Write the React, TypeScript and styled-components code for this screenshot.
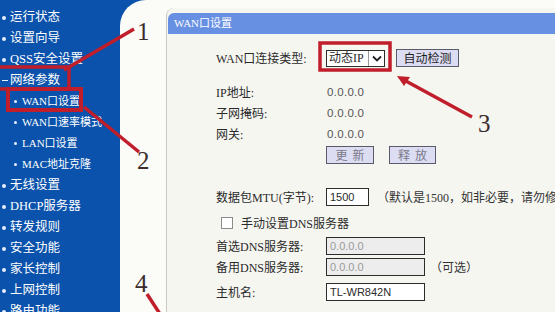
import React from "react";
import styled, { createGlobalStyle } from "styled-components";

const Global = createGlobalStyle`
  html, body { margin: 0; padding: 0; background: #ffffff; }
  body { font-family: "Liberation Serif", "Noto Sans CJK SC", serif; font-size: 12px; }
  * { box-sizing: border-box; }
`;

const MIX = `"Liberation Serif", "Noto Sans CJK SC", serif`;

const Page = styled.div`
  position: relative;
  display: flex;
  width: 555px;
  height: 312px;
  overflow: hidden;
  background: #0a52ab;
`;

const Sidebar = styled.nav`
  width: 120px;
  flex: none;
  padding-top: 7px;
  display: flex;
  flex-direction: column;
`;

const MenuItem = styled.div<{ $sub?: boolean; $open?: boolean }>`
  position: relative;
  height: 21px;
  line-height: 21px;
  padding-left: ${(p) => (p.$sub ? 22 : 10)}px;
  color: #ffffff;
  font-family: ${MIX};
  font-size: ${(p) => (p.$sub ? 11 : 12.5)}px;
  white-space: nowrap;
  &::before {
    content: "";
    position: absolute;
    left: ${(p) => (p.$sub ? 14 : 2)}px;
    top: ${(p) => (p.$open ? 10 : 9)}px;
    width: ${(p) => (p.$open ? 6 : p.$sub ? 3 : 4)}px;
    height: ${(p) => (p.$open ? 1 : p.$sub ? 3 : 4)}px;
    background: #e8eefc;
    border-radius: ${(p) => (p.$open ? 0 : 50)}%;
  }
`;

const Gutter = styled.div`
  width: 46px;
  flex: none;
  background: #fbfbf8;
  border-top-left-radius: 26px;
`;

const Panel = styled.main`
  flex: 1;
  display: flex;
  flex-direction: column;
  background: #fbfbf8;
`;

const PanelFrame = styled.div`
  flex: 1;
  margin-top: 8px;
  border-left: 1px solid #c9c9c2;
  border-top-left-radius: 8px;
  background: #f6f6f1;
  padding-top: 5px;
`;

const PanelHeader = styled.div`
  height: 21px;
  line-height: 21px;
  margin-left: 1px;
  padding-left: 6px;
  background: #6890e2;
  color: #ffffff;
  font-family: ${MIX};
  font-size: 11px;
  border-top-left-radius: 6px;
`;

const Form = styled.div`
  display: flex;
  flex-direction: column;
  padding-left: 49px;
  color: #2a2a2a;
  font-family: ${MIX};
`;

const Row = styled.div<{ $mt: number; $h: number }>`
  display: flex;
  align-items: center;
  margin-top: ${(p) => p.$mt}px;
  height: ${(p) => p.$h}px;
  white-space: nowrap;
`;

const Label = styled.span`
  width: 110px;
  flex: none;
  font-size: 12px;
`;

const Value = styled.span`
  padding-left: 1px;
  color: #555555;
  font-family: "Liberation Sans", sans-serif;
  font-size: 11.5px;
  letter-spacing: 0.3px;
`;

const Select = styled.div`
  display: flex;
  align-items: stretch;
  width: 59px;
  height: 17px;
  border: 1px solid #2c2c2c;
  background: #ffffff;
  font-size: 12px;
`;

const SelectText = styled.span`
  flex: 1;
  line-height: 15px;
  padding-left: 2px;
`;

const SelectArrow = styled.span`
  width: 16px;
  border-left: 1px solid #9a9a9a;
  display: flex;
  align-items: center;
  justify-content: center;
`;

const Button = styled.button<{ $w: number; $dim?: boolean; $ml?: number }>`
  width: ${(p) => p.$w}px;
  height: 18px;
  margin-left: ${(p) => p.$ml ?? 0}px;
  padding: 0;
  border: 1px solid #5a5a6a;
  background: #dcdcf2;
  color: ${(p) => (p.$dim ? "#7a7a8a" : "#1f1f1f")};
  font-family: "Noto Sans CJK SC", sans-serif;
  font-size: 12px;
  line-height: 16px;
  letter-spacing: ${(p) => (p.$dim ? 5 : 0)}px;
  text-indent: ${(p) => (p.$dim ? 5 : 0)}px;
`;

const Input = styled.div<{ $w: number; $disabled?: boolean }>`
  width: ${(p) => p.$w}px;
  height: 18px;
  border: 1px solid #2c2c2c;
  background: ${(p) => (p.$disabled ? "#ededed" : "#ffffff")};
  color: ${(p) => (p.$disabled ? "#9a9a9a" : "#2a2a2a")};
  padding-left: 3px;
  font-family: "Liberation Sans", sans-serif;
  font-size: 11px;
  line-height: 16px;
`;

const Hint = styled.span<{ $ml: number }>`
  margin-left: ${(p) => p.$ml}px;
  font-size: 12px;
  color: #333333;
`;

const Check = styled.span`
  width: 12px;
  height: 12px;
  margin-left: 5px;
  margin-right: 8px;
  border: 1px solid #8c8c8c;
  background: #ffffff;
`;

const Overlay = styled.svg`
  position: absolute;
  left: 0;
  top: 0;
  pointer-events: none;
`;

const Num = styled.text`
  font-family: "Liberation Serif", serif;
  font-size: 25px;
  fill: #3b2c2c;
`;

const menu: { t: string; sub?: boolean; open?: boolean }[] = [
  { t: "运行状态" },
  { t: "设置向导" },
  { t: "QSS安全设置" },
  { t: "网络参数", open: true },
  { t: "WAN口设置", sub: true },
  { t: "WAN口速率模式", sub: true },
  { t: "LAN口设置", sub: true },
  { t: "MAC地址克隆", sub: true },
  { t: "无线设置" },
  { t: "DHCP服务器" },
  { t: "转发规则" },
  { t: "安全功能" },
  { t: "家长控制" },
  { t: "上网控制" },
  { t: "路由功能" },
];

const RED = "#bf1e2a";

export default function App() {
  return (
    <>
      <Global />
      <Page>
        <Sidebar>
          {menu.map((m) => (
            <MenuItem key={m.t} $sub={m.sub} $open={m.open}>
              {m.t}
            </MenuItem>
          ))}
        </Sidebar>
        <Gutter />
        <Panel>
          <PanelFrame>
            <PanelHeader>WAN口设置</PanelHeader>
            <Form>
              <Row $mt={9} $h={30}>
                <Label>WAN口连接类型:</Label>
                <Select>
                  <SelectText>动态IP</SelectText>
                  <SelectArrow>
                    <svg width="10" height="7" viewBox="0 0 10 7">
                      <path d="M1 1.5 L5 5.5 L9 1.5" stroke="#222" strokeWidth="1.8" fill="none" />
                    </svg>
                  </SelectArrow>
                </Select>
                <Button $w={63} $ml={11}>自动检测</Button>
              </Row>
              <Row $mt={8.5} $h={21}>
                <Label>IP地址:</Label>
                <Value>0.0.0.0</Value>
              </Row>
              <Row $mt={0} $h={21}>
                <Label>子网掩码:</Label>
                <Value>0.0.0.0</Value>
              </Row>
              <Row $mt={0} $h={21}>
                <Label>网关:</Label>
                <Value>0.0.0.0</Value>
              </Row>
              <Row $mt={0.5} $h={19}>
                <Label />
                <Button $w={48} $dim>更新</Button>
                <Button $w={47} $dim $ml={15}>释放</Button>
              </Row>
              <Row $mt={22} $h={21}>
                <Label>数据包MTU(字节):</Label>
                <Input $w={43}>1500</Input>
                <Hint $ml={8}>（默认是1500，如非必要，请勿修改）</Hint>
              </Row>
              <Row $mt={5} $h={21}>
                <Check />
                <span>手动设置DNS服务器</span>
              </Row>
              <Row $mt={2} $h={21}>
                <Label>首选DNS服务器:</Label>
                <Input $w={99} $disabled>0.0.0.0</Input>
              </Row>
              <Row $mt={0} $h={21}>
                <Label>备用DNS服务器:</Label>
                <Input $w={99} $disabled>0.0.0.0</Input>
                <Hint $ml={5}>（可选）</Hint>
              </Row>
              <Row $mt={4} $h={21}>
                <Label>主机名:</Label>
                <Input $w={99}>TL-WR842N</Input>
              </Row>
            </Form>
          </PanelFrame>
        </Panel>
        <Overlay width="555" height="312" viewBox="0 0 555 312">
          <rect x="-3" y="67" width="72" height="22" fill="none" stroke={RED} strokeWidth="3.5" />
          <rect x="8" y="89" width="73" height="21" fill="none" stroke={RED} strokeWidth="4" />
          <line x1="64" y1="70" x2="134" y2="29" stroke={RED} strokeWidth="3.5" />
          <line x1="84" y1="107" x2="139" y2="152" stroke={RED} strokeWidth="3.5" />
          <rect x="320" y="43" width="70" height="27" fill="none" stroke={RED} strokeWidth="3.5" />
          <line x1="472" y1="117" x2="404" y2="80" stroke={RED} strokeWidth="3.5" />
          <polygon points="397,76 410,77 404,86" fill={RED} />
          <line x1="147" y1="294" x2="160" y2="314" stroke={RED} strokeWidth="3.5" />
          <Num x="137" y="40">1</Num>
          <Num x="137" y="169">2</Num>
          <Num x="478" y="132">3</Num>
          <Num x="135" y="292">4</Num>
        </Overlay>
      </Page>
    </>
  );
}
